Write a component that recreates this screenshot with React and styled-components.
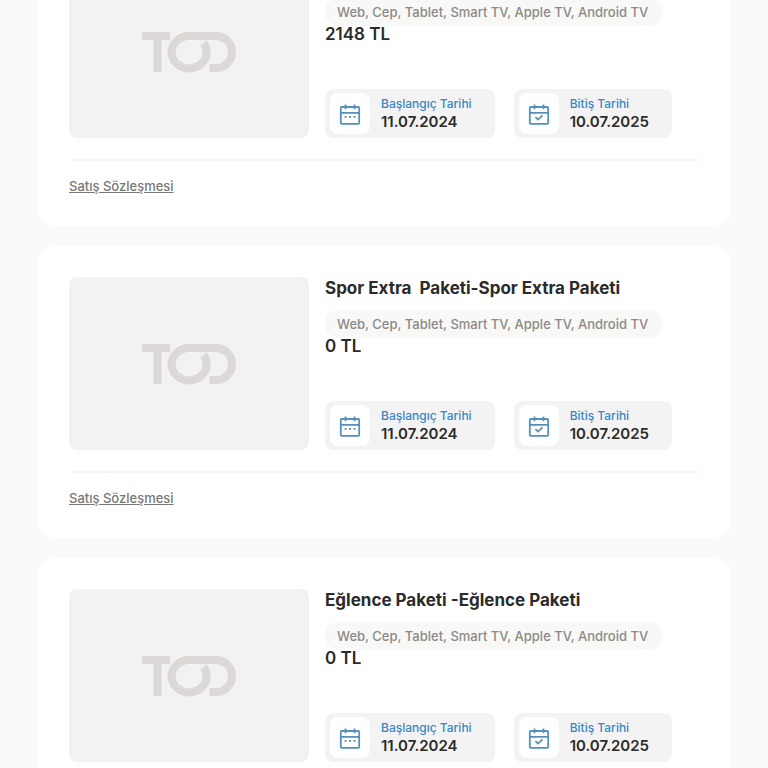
import React from "react";
import styled, { createGlobalStyle } from "styled-components";

const GlobalStyle = createGlobalStyle`
  * {
    box-sizing: border-box;
  }

  body {
    margin: 0;
    background-color: #fafafa;
    color: #2b2b2b;
    font-family: Inter, "Open Sans", sans-serif;
  }
`;

const Page = styled.main`
  height: 100vh;
  overflow: hidden;
  padding: 0 37px 0 38px;
`;

/* the list is scrolled a little, the first card starts above the window */
const CardList = styled.div`
  display: flex;
  flex-direction: column;
  gap: 20px;
  margin-top: -66px;
`;

const Card = styled.article`
  padding: 31px 31px 30px;
  border-radius: 18px;
  background-color: #ffffff;
`;

const CardBody = styled.div`
  display: flex;
  gap: 16px;
`;

const Poster = styled.div`
  flex: 0 0 240px;
  min-height: 173px;
  display: flex;
  align-items: center;
  justify-content: center;
  border-radius: 8px;
  background-color: #f2f2f2;
`;

const Info = styled.div`
  flex: 1;
  min-width: 0;
  display: flex;
  flex-direction: column;
  align-items: flex-start;
`;

const Title = styled.h2`
  min-height: 22px;
  margin: 0 0 11px;
  font-size: 17px;
  line-height: 22px;
  font-weight: 700;
  white-space: pre-wrap;
`;

const Devices = styled.p`
  margin: 0;
  padding: 0 14px 0 12px;
  border-radius: 14px;
  background-color: #f8f8f7;
  color: #8c8987;
  font-size: 13px;
  line-height: 28px;
  font-weight: 500;
`;

const Price = styled.strong`
  font-size: 17px;
  line-height: 16px;
  font-weight: 600;
`;

const Dates = styled.div`
  display: flex;
  gap: 19px;
  margin-top: auto;
`;

const DateBox = styled.div`
  display: flex;
  align-items: center;
  gap: 11px;
  padding: 4px 23px 4px 5px;
  border-radius: 8px;
  background-color: #f3f3f3;
`;

const IconTile = styled.span`
  width: 40px;
  height: 41px;
  display: flex;
  align-items: center;
  justify-content: center;
  border-radius: 8px;
  background-color: #ffffff;
`;

const DateText = styled.div`
  display: flex;
  flex-direction: column;
`;

const DateLabel = styled.span`
  color: #3a86c8;
  font-size: 12px;
  line-height: 17px;
  font-weight: 500;
`;

const DateValue = styled.time`
  font-size: 15px;
  line-height: 20px;
  font-weight: 600;
`;

const CardFooter = styled.footer`
  display: flex;
  margin-top: 21px;
  padding-top: 15px;
  border-top: 2px solid #f7f7f7;
`;

const ContractLink = styled.a`
  color: #777777;
  font-size: 13px;
  line-height: 20px;
  font-weight: 500;
`;

const TodLogo = () => (
  <svg width="96" height="42" viewBox="0 0 96 42" fill="none" stroke="#dcd8d7" strokeWidth="8" role="img" aria-label="TOD">
    <path d="M1 5H29M16.5 5V41" />
    <path d="M74 5H48A17.5 16.2 0 1 0 62.5 12" />
    <path d="M73 5H75A16 16 0 0 1 75 37H68.5" />
  </svg>
);

const CalendarIcon = ({ checked }) => (
  <svg width="22" height="22" viewBox="0 0 22 22" fill="none" stroke="#5690b8" strokeWidth="1.8" aria-hidden="true">
    <rect x="1.8" y="4" width="18.4" height="16.8" rx="1" />
    <path d="M2 9.8H20M6.5 1.4V6.2M15.5 1.4V6.2" />
    {checked ? <path d="M7.5 14.2L10 16.6L14.5 12.4" /> : <path d="M5.5 13.8H16.5" strokeDasharray="2 2.5" />}
  </svg>
);

const packages = [
  { id: 1, title: "", price: "2148 TL", hasContract: true },
  { id: 2, title: "Spor Extra  Paketi-Spor Extra Paketi", price: "0 TL", hasContract: true },
  { id: 3, title: "Eğlence Paketi -Eğlence Paketi", price: "0 TL", hasContract: false },
];

const PackageCard = ({ item }) => (
  <Card>
    <CardBody>
      <Poster>
        <TodLogo />
      </Poster>
      <Info>
        <Title>{item.title}</Title>
        <Devices>Web, Cep, Tablet, Smart TV, Apple TV, Android TV</Devices>
        <Price>{item.price}</Price>
        <Dates>
          <DateBox>
            <IconTile>
              <CalendarIcon />
            </IconTile>
            <DateText>
              <DateLabel>Başlangıç Tarihi</DateLabel>
              <DateValue dateTime="2024-07-11">11.07.2024</DateValue>
            </DateText>
          </DateBox>
          <DateBox>
            <IconTile>
              <CalendarIcon checked />
            </IconTile>
            <DateText>
              <DateLabel>Bitiş Tarihi</DateLabel>
              <DateValue dateTime="2025-07-10">10.07.2025</DateValue>
            </DateText>
          </DateBox>
        </Dates>
      </Info>
    </CardBody>
    {item.hasContract && (
      <CardFooter>
        <ContractLink href="#">Satış Sözleşmesi</ContractLink>
      </CardFooter>
    )}
  </Card>
);

const App = () => (
  <>
    <GlobalStyle />
    <Page>
      <CardList>
        {packages.map((item) => (
          <PackageCard key={item.id} item={item} />
        ))}
      </CardList>
    </Page>
  </>
);

export default App;
